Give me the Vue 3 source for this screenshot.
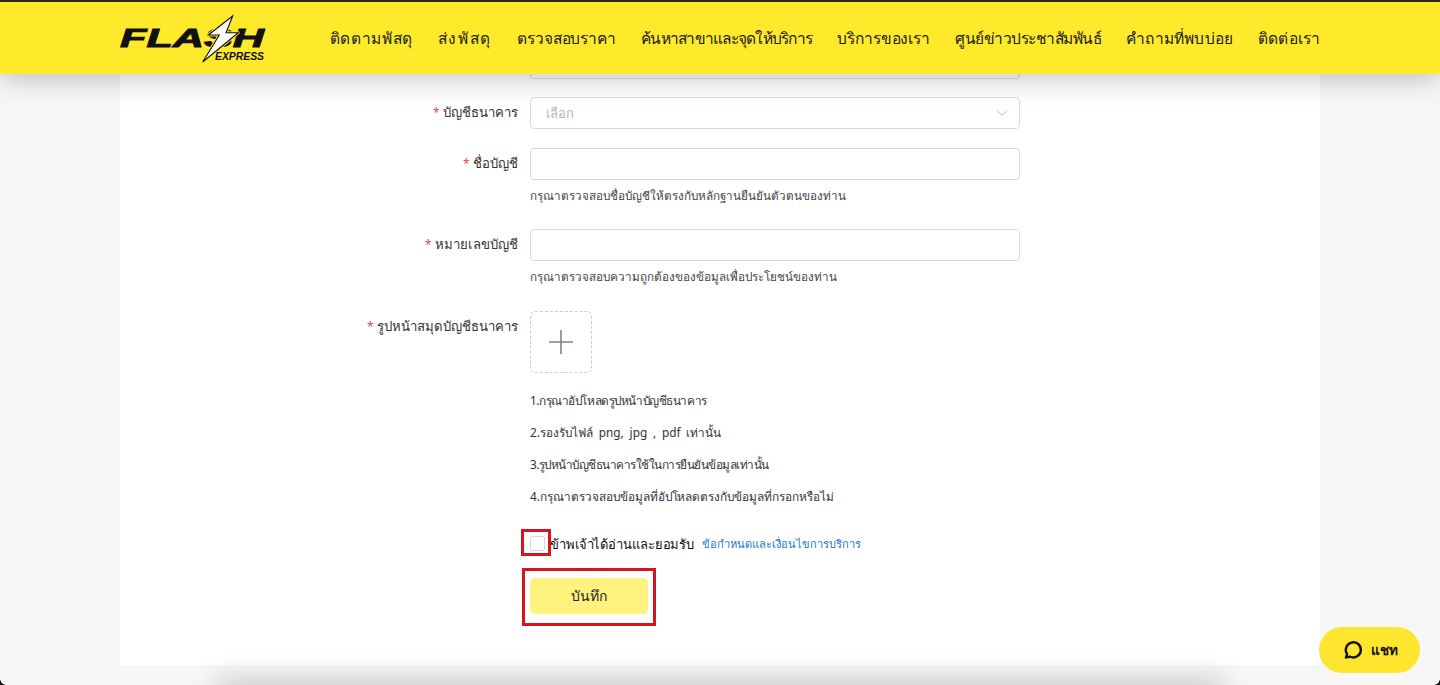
<script setup>
const nav = [
  { t: 'ติดตามพัสดุ', ls: 0.65 },
  { t: 'ส่งพัสดุ', ls: 1.6 },
  { t: 'ตรวจสอบราคา', ls: -0.07 },
  { t: 'ค้นหาสาขาและจุดให้บริการ', ls: -0.75 },
  { t: 'บริการของเรา', ls: -0.09 },
  { t: 'ศูนย์ข่าวประชาสัมพันธ์', ls: -0.49 },
  { t: 'คำถามที่พบบ่อย', ls: 0.2 },
  { t: 'ติดต่อเรา', ls: 0.1 },
]
const notes = [
  { t: '1.กรุณาอัปโหลดรูปหน้าบัญชีธนาคาร', ls: -0.43, ws: 0 },
  { t: '2.รองรับไฟล์ png, jpg , pdf เท่านั้น', ls: 0, ws: 2.8 },
  { t: '3.รูปหน้าบัญชีธนาคารใช้ในการยืนยันข้อมูลเท่านั้น', ls: -0.5, ws: 0 },
  { t: '4.กรุณาตรวจสอบข้อมูลที่อัปโหลดตรงกับข้อมูลที่กรอกหรือไม่', ls: -0.02, ws: 0 },
]
</script>

<template>
  <div class="page">
    <header class="header">
      <svg class="logo" width="146" height="50" viewBox="0 0 146 50">
        <text class="logo-flash" x="0" y="32" textLength="144" lengthAdjust="spacingAndGlyphs">FLASH</text>
        <polygon points="112.7,1 88.3,20 99.3,20 82.7,47 118.3,17.7 106,17.7" fill="#fff" stroke="#fee92b" stroke-width="3" stroke-linejoin="round" />
        <polygon points="112.7,1 88.3,20 99.3,20 82.7,47 118.3,17.7 106,17.7" fill="#fff" stroke="#111" stroke-width="1.1" stroke-linejoin="miter" />
        <text class="logo-express" x="95" y="45" textLength="49" lengthAdjust="spacingAndGlyphs">EXPRESS</text>
      </svg>
      <nav class="nav">
        <a v-for="n in nav" :key="n.t" class="nav-item" :style="{ letterSpacing: n.ls + 'px' }">{{ n.t }}</a>
      </nav>
    </header>

    <main class="card">
      <div class="row row-top">
        <div class="label"></div>
        <div class="control"><div class="input"></div></div>
      </div>
      <div class="row row-bank">
        <div class="label"><i>*</i> บัญชีธนาคาร</div>
        <div class="control">
          <div class="input select">
            <span>เลือก</span>
            <svg width="12" height="8" viewBox="0 0 12 8"><path d="M1 1.5 6 6.5 11 1.5" fill="none" stroke="#b4b8bf" stroke-width="1"/></svg>
          </div>
        </div>
      </div>
      <div class="row row-name">
        <div class="label"><i>*</i> ชื่อบัญชี</div>
        <div class="control">
          <div class="input"></div>
          <p class="hint">กรุณาตรวจสอบชื่อบัญชีให้ตรงกับหลักฐานยืนยันตัวตนของท่าน</p>
        </div>
      </div>
      <div class="row row-number">
        <div class="label"><i>*</i> หมายเลขบัญชี</div>
        <div class="control">
          <div class="input"></div>
          <p class="hint">กรุณาตรวจสอบความถูกต้องของข้อมูลเพื่อประโยชน์ของท่าน</p>
        </div>
      </div>
      <div class="row row-upload">
        <div class="label"><i>*</i> รูปหน้าสมุดบัญชีธนาคาร</div>
        <div class="control">
          <div class="upload">
            <svg width="26" height="26" viewBox="0 0 26 26"><path d="M13 1v24M1 13h24" stroke="#7d8390" stroke-width="1.6" fill="none"/></svg>
          </div>
          <ul class="notes">
            <li v-for="n in notes" :key="n.t" :style="{ letterSpacing: n.ls + 'px', wordSpacing: n.ws + 'px' }">{{ n.t }}</li>
          </ul>
        </div>
      </div>
      <div class="row row-agree">
        <div class="label"></div>
        <div class="control agree">
          <span class="check-mark"><span class="check"></span></span>
          <span class="agree-text">ข้าพเจ้าได้อ่านและยอมรับ</span>
          <a class="terms">ข้อกำหนดและเงื่อนไขการบริการ</a>
        </div>
      </div>
      <div class="row row-save">
        <div class="label"></div>
        <div class="control">
          <span class="save-mark"><button class="save" type="button">บันทึก</button></span>
        </div>
      </div>
    </main>

    <div class="next-section"></div>

    <button class="chat" type="button">
      <svg width="20" height="20" viewBox="0 0 22 22"><path d="M3.2 19.2 4.6 15.6A8.3 8.3 0 1 1 8 18.4Z" fill="none" stroke="#111" stroke-width="2.6" stroke-linejoin="round"/></svg>
      <span>แชท</span>
    </button>
    <span class="corner corner-l"></span>
    <span class="corner corner-r"></span>
  </div>
</template>

<style>
html, body { margin: 0; background: #f7f7f7; }
</style>

<style scoped>
.page {
  position: relative;
  height: 685px;
  overflow: hidden;
  background: #f7f7f7;
  font-family: "Noto Sans", "Open Sans", "DejaVu Sans", sans-serif;
  color: #222;
}
.header {
  position: absolute;
  inset: 0 0 auto 0;
  z-index: 2;
  height: 72px;
  box-sizing: content-box;
  padding: 0 120px;
  border-top: 2px solid #2a2a22;
  background: #fee92b;
  box-shadow: 0 6px 26px rgba(0, 0, 0, 0.22);
  display: flex;
  align-items: center;
  justify-content: space-between;
}
.logo { display: block; margin-top: 3px; flex: none; overflow: visible; }
.logo-flash {
  font-family: "Liberation Sans", sans-serif;
  font-weight: 700;
  font-style: italic;
  font-size: 26px;
  fill: #111;
  stroke: #111;
  stroke-width: 0.9;
}
.logo-express {
  font-family: "Liberation Sans", sans-serif;
  font-weight: 700;
  font-style: italic;
  font-size: 11.5px;
  fill: #111;
}
.nav { display: flex; gap: 25px; }
.nav-item { font-size: 15.5px; line-height: 24px; color: #222; white-space: nowrap; }
.card {
  margin: 0 120px;
  height: 665px;
  box-sizing: border-box;
  padding-top: 47px;
  background: #fff;
}
.row { display: flex; }
.label {
  flex: none;
  width: 398px;
  text-align: right;
  font-size: 13.2px;
  line-height: 31px;
  color: #333;
  white-space: nowrap;
}
.label i { color: #e5484d; font-style: normal; font-size: 12px; }
.control { flex: none; width: 490px; margin-left: 12px; }
.row-bank { margin-top: 18px; }
.row-name { margin-top: 19px; }
.row-number { margin-top: 24px; }
.row-upload { margin-top: 25px; }
.input {
  height: 32px;
  box-sizing: border-box;
  border: 1px solid #d9dbe0;
  border-radius: 4px;
  background: #fff;
}
.select {
  display: flex;
  align-items: center;
  justify-content: space-between;
  padding: 0 11px 0 15px;
  font-size: 13px;
  color: #b3b6bc;
}
.hint {
  margin: 5px 0 0;
  font-size: 11.7px;
  line-height: 20px;
  color: #444;
  white-space: nowrap;
}
.upload {
  width: 62px;
  height: 62px;
  box-sizing: border-box;
  border: 1px dashed #c9ccd2;
  border-radius: 5px;
  display: flex;
  align-items: center;
  justify-content: center;
}
.notes {
  list-style: none;
  margin: 11px 0 0;
  padding: 0;
  font-size: 11.8px;
  line-height: 32px;
  color: #333;
  white-space: nowrap;
}
.row-agree { margin-top: 18px; }
.agree {
  display: flex;
  align-items: center;
  height: 28px;
}
.check-mark {
  position: relative;
  width: 16px;
  height: 16px;
  margin-right: 4px;
  flex: none;
}
.check-mark::after {
  content: "";
  position: absolute;
  left: -9px;
  top: -7px;
  width: 30px;
  height: 27px;
  box-sizing: border-box;
  border: 3px solid #d4141f;
}
.check {
  display: block;
  width: 15px;
  height: 15px;
  box-sizing: border-box;
  border: 1px solid #d6d8dc;
  border-radius: 2px;
  background: #fff;
}
.agree-text { font-size: 13px; letter-spacing: -0.1px; color: #111; white-space: nowrap; }
.terms { margin-left: 8px; font-size: 11.1px; color: #1a78c8; white-space: nowrap; }
.row-save { margin-top: 20px; }
.save-mark { position: relative; display: inline-block; }
.save-mark::after {
  content: "";
  position: absolute;
  left: -8px;
  top: -10px;
  width: 134px;
  height: 58px;
  box-sizing: border-box;
  border: 3px solid #d4141f;
}
.save {
  display: block;
  width: 118px;
  height: 36px;
  padding: 0;
  border: 0;
  border-radius: 5px;
  background: #fff27f;
  font: inherit;
  font-size: 14px;
  color: #222;
}
.next-section {
  height: 40px;
  margin: 20px 215px 0;
  background: #fff;
  box-shadow: 0 -6px 28px rgba(0, 0, 0, 0.18);
}
.chat {
  position: absolute;
  left: 1319px;
  top: 627px;
  width: 101px;
  height: 46px;
  border: 0;
  border-radius: 23px;
  background: #fee52e;
  padding: 0 0 0 2px;
  display: flex;
  align-items: center;
  justify-content: center;
  gap: 8px;
  font: inherit;
  font-size: 13.5px;
  font-weight: 700;
  color: #111;
}
.corner { position: absolute; bottom: 0; width: 6px; height: 6px; }
.corner-l { left: 0; background: radial-gradient(circle at 100% 0, transparent 5.5px, #111 6px); }
.corner-r { right: 0; background: radial-gradient(circle at 0 0, transparent 5.5px, #111 6px); }
</style>
